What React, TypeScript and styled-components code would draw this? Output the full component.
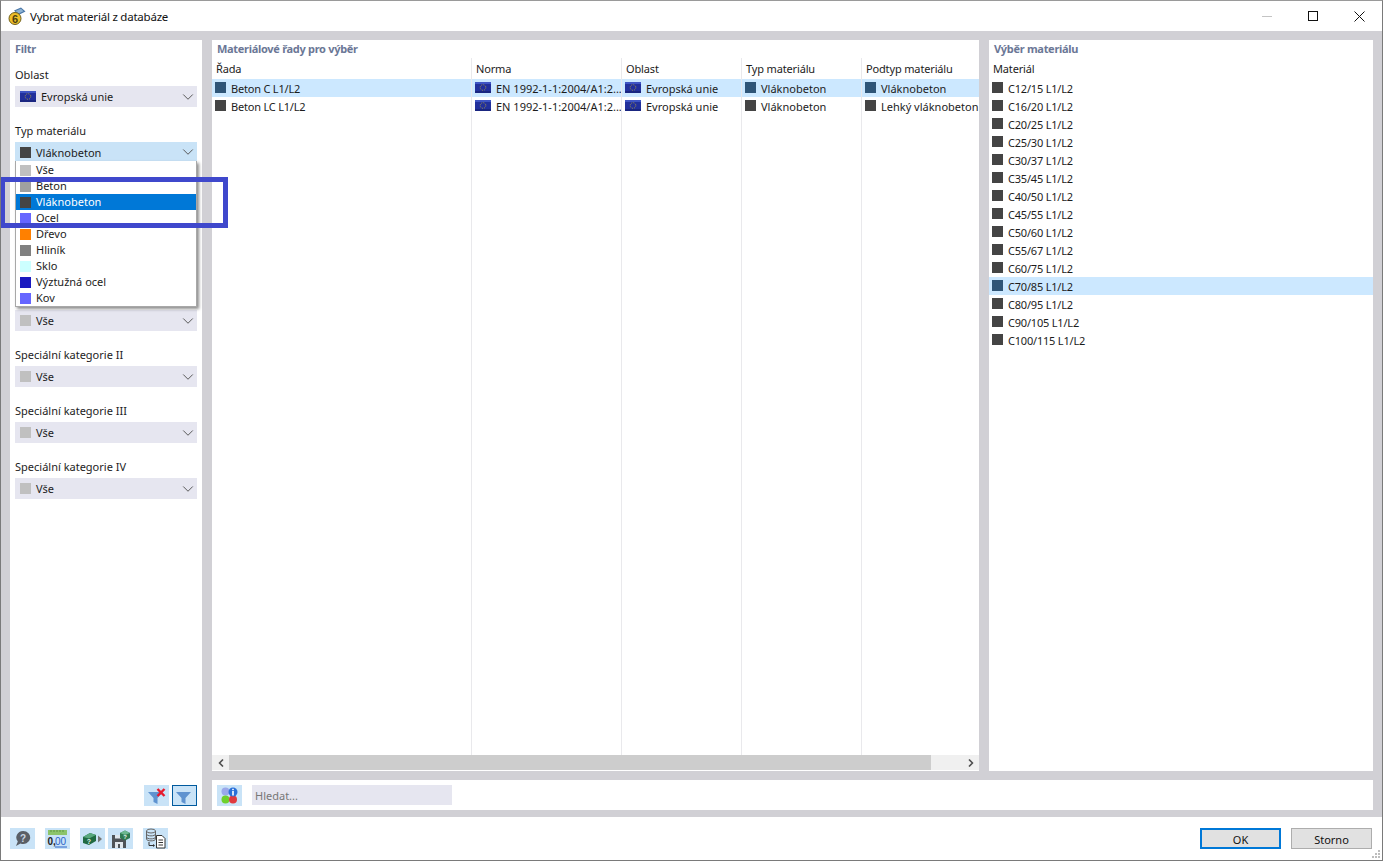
import React from "react";
import styled, { createGlobalStyle } from "styled-components";
import { ChevronDown, ChevronLeft, ChevronRight } from "lucide-react";

const GlobalStyle = createGlobalStyle`
  html, body {
    margin: 0;
    padding: 0;
    background: #fff;
  }
  body {
    font-family: "Noto Sans", "Open Sans", "Liberation Sans", sans-serif;
    font-size: 11px;
    color: #1c1c1c;
  }
`;

const Window = styled.div`
  position: relative;
  box-sizing: border-box;
  width: 1383px;
  height: 861px;
  display: flex;
  flex-direction: column;
  border: 1px solid #7a7a7a;
  border-top-color: #9a9a9a;
  background: #fff;
  overflow: hidden;
`;

const TitleBar = styled.div`
  height: 30px;
  flex: none;
  display: flex;
  align-items: center;
  padding-left: 7px;
  font-size: 11.5px;
`;

const TitleText = styled.span`
  flex: 1;
  margin-left: 4px;
  letter-spacing: -0.22px;
  color: #111;
`;

const WindowButton = styled.div`
  width: 46px;
  height: 30px;
  display: flex;
  align-items: center;
  justify-content: center;
`;

const Body = styled.div`
  flex: 1;
  min-height: 0;
  background: #d1d0d5;
  padding: 9px 9px 7px;
  display: grid;
  grid-template-columns: 192px 767px 384px;
  grid-template-rows: 731px 30px;
  gap: 9px 10px;
`;

const Panel = styled.div`
  background: #fff;
  display: flex;
  flex-direction: column;
  min-width: 0;
  min-height: 0;
`;

const FilterPanel = styled(Panel)`
  grid-row: 1 / span 2;
  position: relative;
  padding: 0 5px 4px;
`;

const PanelTitle = styled.div<{ $inset?: number }>`
  height: 18px;
  line-height: 18px;
  font-weight: 700;
  letter-spacing: -0.3px;
  color: #6b7796;
  padding-left: ${(p) => p.$inset ?? 5}px;
  flex: none;
`;

const FieldLabel = styled.div<{ $top: number }>`
  margin-top: ${(p) => p.$top}px;
  height: 16px;
  line-height: 16px;
`;

const Select = styled.div<{ $active?: boolean; $short?: boolean }>`
  margin-top: 3px;
  height: ${(p) => (p.$short ? 20 : 21)}px;
  display: flex;
  align-items: center;
  gap: 5px;
  padding: 0 0 0 5px;
  background: ${(p) => (p.$active ? "#c9e3f7" : "#e6e6f0")};
`;

const SelectText = styled.span`
  flex: 1;
`;

const Swatch = styled.span<{ $color: string }>`
  flex: none;
  display: inline-block;
  width: 11px;
  height: 11px;
  background: ${(p) => p.$color};
`;

const CoveredGap = styled.div`
  height: 145px;
  flex: none;
`;

const Spacer = styled.div`
  flex: 1;
`;

const FilterButtons = styled.div`
  display: flex;
  justify-content: flex-end;
  gap: 3px;
`;

const IconButton = styled.div<{ $outlined?: boolean }>`
  box-sizing: border-box;
  width: 25px;
  height: 21px;
  flex: none;
  display: flex;
  align-items: center;
  justify-content: center;
  background: #c9e3f7;
  border: ${(p) => (p.$outlined ? "1px solid #005a9e" : "none")};
`;

const Dropdown = styled.div`
  position: absolute;
  left: 5px;
  top: 121px;
  width: 182px;
  box-sizing: border-box;
  background: #fff;
  border: 1px solid #a8a8a8;
  border-top: none;
  padding: 1px 0 0;
  box-shadow: 2px 2px 3px rgba(0, 0, 0, 0.45);
  z-index: 2;
`;

const DropdownItem = styled.div<{ $selected?: boolean }>`
  height: 16px;
  display: flex;
  align-items: center;
  gap: 5px;
  padding-left: 4px;
  background: ${(p) => (p.$selected ? "#0078d7" : "transparent")};
  color: ${(p) => (p.$selected ? "#fff" : "#1c1c1c")};
`;

const DropdownText = styled.span`
  padding-bottom: 2px;
`;

const Callout = styled.div`
  position: absolute;
  left: -1px;
  top: 176px;
  width: 228px;
  height: 51px;
  box-sizing: border-box;
  border: 5px solid #3f48cc;
  z-index: 3;
  pointer-events: none;
`;

const SeriesPanel = styled(Panel)``;

const TableHeader = styled.div<{ $columns: string }>`
  display: grid;
  grid-template-columns: ${(p) => p.$columns};
  height: 21px;
  flex: none;
`;

const HeaderCell = styled.div`
  line-height: 21px;
  padding-left: 4px;
  letter-spacing: -0.15px;
  white-space: nowrap;
  overflow: hidden;
`;

const TableBody = styled.div`
  flex: 1;
  min-height: 0;
  display: flex;
  flex-direction: column;
`;

const Row = styled.div<{ $columns?: string; $selected?: boolean }>`
  display: grid;
  grid-template-columns: ${(p) => p.$columns ?? "1fr"};
  height: 18px;
  flex: none;
  background: ${(p) => (p.$selected ? "#cce8ff" : "transparent")};
`;

const Cell = styled.div`
  display: flex;
  align-items: center;
  gap: 5px;
  padding-left: 3px;
  white-space: nowrap;
  overflow: hidden;
  min-width: 0;
  padding-bottom: 2px;
  box-sizing: border-box;
`;

const CellText = styled.span<{ $tight?: boolean }>`
  padding-top: 2px;
  letter-spacing: ${(p) => (p.$tight ? "-0.2px" : "0")};
`;

const TableArea = styled.div`
  position: relative;
  flex: 1;
  min-height: 0;
  display: flex;
  flex-direction: column;
`;

const Dividers = styled.div<{ $columns: string }>`
  position: absolute;
  inset: 0;
  display: grid;
  grid-template-columns: ${(p) => p.$columns};
  pointer-events: none;
`;

const Divider = styled.div`
  border-right: 1px solid #e9e9ec;
`;

const ScrollBar = styled.div`
  height: 15px;
  flex: none;
  margin-bottom: 1px;
  display: flex;
  background: #f0f0f0;
`;

const ScrollArrow = styled.div`
  width: 17px;
  display: flex;
  align-items: center;
  justify-content: center;
  background: #f0f0f0;
`;

const ScrollTrack = styled.div`
  flex: 1;
  display: flex;
`;

const ScrollThumb = styled.div`
  width: 702px;
  background: #cdcdcd;
`;

const SearchPanel = styled(Panel)`
  grid-column: 2 / span 2;
  flex-direction: row;
  align-items: center;
  padding-left: 5px;
  gap: 10px;
`;

const SearchInput = styled.div`
  width: 200px;
  height: 20px;
  line-height: 22px;
  padding-left: 3px;
  box-sizing: border-box;
  background: #e6e6f0;
  color: #777;
`;

const Footer = styled.div`
  height: 43px;
  flex: none;
  display: flex;
  align-items: center;
  padding: 0 10px 0 9px;
`;

const FooterTools = styled.div`
  display: flex;
  flex: 1;
`;

const FooterTool = styled(IconButton)<{ $gap?: number }>`
  margin-left: ${(p) => p.$gap ?? 0}px;
`;

const DialogButton = styled.button<{ $primary?: boolean }>`
  box-sizing: border-box;
  width: 81px;
  height: 21px;
  margin-left: 10px;
  padding: 1px 0 0;
  font: inherit;
  color: #111;
  background: #e1e1e1;
  border: ${(p) => (p.$primary ? "2px solid #0078d7" : "1px solid #adadad")};
`;

const Grip = styled.svg`
  position: absolute;
  right: 1px;
  bottom: 1px;
`;

const columns = "260px 150px 120px 120px 117px";

const Flag = () => (
  <svg width="16" height="11" viewBox="0 0 16 11" style={{ flex: "none" }}>
    <rect width="16" height="11" fill="#22309c" />
    <rect width="16" height="2" fill="#3f55c4" />
    <rect y="9" width="16" height="2" fill="#1a2680" />
    <circle cx="8" cy="5.5" r="2.8" fill="none" stroke="#a89a44" strokeWidth="1" strokeDasharray="1 1.2" />
  </svg>
);

const AppIcon = () => (
  <svg width="18" height="18" viewBox="0 0 18 18" style={{ flex: "none" }}>
    <path d="M6 3.5 L13 0.5 L17.5 4.5 L10.5 8 Z" fill="#4a77a8" />
    <path d="M7.5 4 L13 1.8 L15.5 4.2 L10.5 6.5 Z" fill="#8fb4d4" />
    <circle cx="7" cy="11.5" r="6" fill="#efc02a" stroke="#6e5f1a" />
    <text x="7" y="15.5" textAnchor="middle" fontSize="11" fontWeight="700" fill="#4a3f12" fontFamily="Liberation Sans">
      6
    </text>
  </svg>
);

const FunnelIcon = ({ cross }: { cross?: boolean }) => (
  <svg width="20" height="18" viewBox="0 0 20 18">
    <path d="M1 5 H16 L10.5 11 V17 L6.5 15 V11 Z" fill="#5f93d0" />
    {cross && <path d="M10.5 2 L17.5 9 M17.5 2 L10.5 9" stroke="#e8192c" strokeWidth="2.4" />}
  </svg>
);

const ColorsIcon = () => (
  <svg width="17" height="17" viewBox="0 0 17 17">
    <circle cx="4.5" cy="4.5" r="4" fill="#9aa8ea" />
    <circle cx="4.5" cy="12.5" r="4" fill="#6fd02c" />
    <circle cx="12" cy="12.5" r="4" fill="#e0393e" />
    <circle cx="12" cy="5" r="4.5" fill="#2a6fd8" />
    <rect x="11.2" y="4" width="1.6" height="4.5" fill="#fff" />
    <rect x="11.2" y="1.8" width="1.6" height="1.4" fill="#fff" />
  </svg>
);

const HelpIcon = () => (
  <svg width="17" height="17" viewBox="0 0 17 17">
    <path d="M9 1 A7 6.5 0 1 1 6.5 13.5 L2 16 L3.8 11.5 A7 6.5 0 0 1 9 1 Z" fill="#5a5f66" />
    <text x="9" y="11.5" textAnchor="middle" fontSize="10" fontWeight="700" fill="#c9d6e2" fontFamily="Liberation Sans">
      ?
    </text>
  </svg>
);

const UnitsIcon = () => (
  <svg width="21" height="20" viewBox="0 0 21 20">
    <rect x="1" y="1" width="19" height="5" fill="#8cc46a" />
    <path d="M4 1 V3 M7 1 V3 M10 1 V3 M13 1 V3 M16 1 V3" stroke="#5d9442" strokeWidth="1" />
    <text x="0.5" y="16" fontSize="10" fontWeight="700" fill="#222" fontFamily="Liberation Sans">
      0,
    </text>
    <text x="8" y="16" fontSize="10" fill="#2a62c8" fontFamily="Liberation Sans">
      00
    </text>
    <path d="M8 18 H20" stroke="#2a62c8" strokeWidth="1" />
  </svg>
);

const Cube = ({ x, y }: { x: number; y: number }) => (
  <g transform={`translate(${x} ${y})`}>
    <path d="M0 3 L5 0.5 L10 3 V8 L5 10.5 L0 8 Z" fill="#2e7a50" />
    <path d="M0 3 L5 5 L10 3 L5 0.5 Z" fill="#6cb88f" />
    <text x="5" y="9" textAnchor="middle" fontSize="6" fontWeight="700" fill="#e4f2ea" fontFamily="Liberation Sans">
      ?
    </text>
  </g>
);

const ImportIcon = () => (
  <svg width="20" height="14" viewBox="0 0 20 14">
    <path d="M0 5 L7 1 L13 3 V9 L6 13 L0 11 Z" fill="#1f6a42" />
    <path d="M0 5 L7 1 L13 3 L6 6.5 Z" fill="#58a87e" />
    <text x="6" y="12" textAnchor="middle" fontSize="7" fontWeight="700" fill="#e4f2ea" fontFamily="Liberation Sans">
      ?
    </text>
    <path d="M15 3.5 L19 7 L15 10.5 Z" fill="#777" />
  </svg>
);

const SaveIcon = () => (
  <svg width="19" height="18" viewBox="0 0 19 18">
    <path d="M1 5 H13 L15 7 V18 H1 Z" fill="#4e5358" />
    <rect x="4" y="5" width="6" height="3.5" fill="#dfe6ec" />
    <rect x="4" y="12" width="8" height="6" fill="#dfe6ec" />
    <rect x="7" y="14" width="2" height="4" fill="#4e5358" />
    <Cube x={9} y={0} />
  </svg>
);

const LibraryIcon = () => (
  <svg width="21" height="21" viewBox="0 0 21 21">
    <ellipse cx="6" cy="3" rx="4.5" ry="2" fill="none" stroke="#666" />
    <path
      d="M1.5 3 V11 C1.5 13.5 10.5 13.5 10.5 11 V3 M1.5 6 C1.5 8.5 10.5 8.5 10.5 6 M1.5 9 C1.5 11.5 10.5 11.5 10.5 9"
      fill="none"
      stroke="#666"
    />
    <path d="M4 14 V17.5 H8" fill="none" stroke="#333" />
    <path d="M8 16 L10 17.5 L8 19 Z" fill="#333" />
    <path d="M11.5 7.5 H17 L20 10.5 V20 H11.5 Z" fill="#fff" stroke="#333" />
    <path d="M13.5 12 H18 M13.5 14.5 H18 M13.5 17 H18" stroke="#333" />
  </svg>
);

const seriesRows = [
  { name: "Beton C L1/L2", subtype: "Vláknobeton", selected: true },
  { name: "Beton LC L1/L2", subtype: "Lehký vláknobeton", selected: false },
];

const materials = [
  "C12/15 L1/L2",
  "C16/20 L1/L2",
  "C20/25 L1/L2",
  "C25/30 L1/L2",
  "C30/37 L1/L2",
  "C35/45 L1/L2",
  "C40/50 L1/L2",
  "C45/55 L1/L2",
  "C50/60 L1/L2",
  "C55/67 L1/L2",
  "C60/75 L1/L2",
  "C70/85 L1/L2",
  "C80/95 L1/L2",
  "C90/105 L1/L2",
  "C100/115 L1/L2",
];

const materialTypes = [
  { name: "Vše", color: "#c0c0c0" },
  { name: "Beton", color: "#a0a0a0" },
  { name: "Vláknobeton", color: "#444444", selected: true },
  { name: "Ocel", color: "#6666ff" },
  { name: "Dřevo", color: "#ff8000" },
  { name: "Hliník", color: "#808080" },
  { name: "Sklo", color: "#ccffff" },
  { name: "Výztužná ocel", color: "#1a1ac0" },
  { name: "Kov", color: "#6666ff" },
];

const lowerFilters = ["Speciální kategorie II", "Speciální kategorie III", "Speciální kategorie IV"];

const Chevron = () => <ChevronDown size={18} strokeWidth={1.3} color="#555" />;

export default function App() {
  const swatch = (selected: boolean) => (selected ? "#2f5577" : "#444444");

  return (
    <>
      <GlobalStyle />
      <Window>
        <TitleBar>
          <AppIcon />
          <TitleText>Vybrat materiál z databáze</TitleText>
          <WindowButton>
            <svg width="10" height="10" viewBox="0 0 10 10">
              <path d="M0 5.5 H10" stroke="#c4c4c4" />
            </svg>
          </WindowButton>
          <WindowButton>
            <svg width="10" height="10" viewBox="0 0 10 10">
              <rect x="0.5" y="0.5" width="9" height="9" fill="none" stroke="#111" />
            </svg>
          </WindowButton>
          <WindowButton>
            <svg width="11" height="11" viewBox="0 0 11 11">
              <path d="M0.5 0.5 L10.5 10.5 M10.5 0.5 L0.5 10.5" stroke="#111" />
            </svg>
          </WindowButton>
        </TitleBar>

        <Body>
          <FilterPanel>
            <PanelTitle $inset={0}>Filtr</PanelTitle>
            <FieldLabel $top={9}>Oblast</FieldLabel>
            <Select>
              <Flag />
              <SelectText>Evropská unie</SelectText>
              <Chevron />
            </Select>
            <FieldLabel $top={16}>Typ materiálu</FieldLabel>
            <Select $active $short>
              <Swatch $color="#444444" />
              <SelectText>Vláknobeton</SelectText>
              <Chevron />
            </Select>
            <Dropdown>
              {materialTypes.map((item) => (
                <DropdownItem key={item.name} $selected={item.selected}>
                  <Swatch $color={item.color} />
                  <DropdownText>{item.name}</DropdownText>
                </DropdownItem>
              ))}
            </Dropdown>
            <CoveredGap />
            <Select>
              <Swatch $color="#c0c0c0" />
              <SelectText>Vše</SelectText>
              <Chevron />
            </Select>
            {lowerFilters.map((label) => (
              <React.Fragment key={label}>
                <FieldLabel $top={16}>{label}</FieldLabel>
                <Select>
                  <Swatch $color="#c0c0c0" />
                  <SelectText>Vše</SelectText>
                  <Chevron />
                </Select>
              </React.Fragment>
            ))}
            <Spacer />
            <FilterButtons>
              <IconButton>
                <FunnelIcon cross />
              </IconButton>
              <IconButton $outlined>
                <FunnelIcon />
              </IconButton>
            </FilterButtons>
          </FilterPanel>

          <SeriesPanel>
            <PanelTitle>Materiálové řady pro výběr</PanelTitle>
            <TableArea>
              <Dividers $columns={columns}>
                <Divider />
                <Divider />
                <Divider />
                <Divider />
              </Dividers>
              <TableHeader $columns={columns}>
                <HeaderCell>Řada</HeaderCell>
                <HeaderCell>Norma</HeaderCell>
                <HeaderCell>Oblast</HeaderCell>
                <HeaderCell>Typ materiálu</HeaderCell>
                <HeaderCell>Podtyp materiálu</HeaderCell>
              </TableHeader>
              <TableBody>
                {seriesRows.map((row) => (
                  <Row key={row.name} $columns={columns} $selected={row.selected}>
                    <Cell>
                      <Swatch $color={swatch(row.selected)} />
                      <CellText $tight>{row.name}</CellText>
                    </Cell>
                    <Cell>
                      <Flag />
                      <CellText>EN 1992-1-1:2004/A1:2...</CellText>
                    </Cell>
                    <Cell>
                      <Flag />
                      <CellText>Evropská unie</CellText>
                    </Cell>
                    <Cell>
                      <Swatch $color={swatch(row.selected)} />
                      <CellText>Vláknobeton</CellText>
                    </Cell>
                    <Cell>
                      <Swatch $color={swatch(row.selected)} />
                      <CellText>{row.subtype}</CellText>
                    </Cell>
                  </Row>
                ))}
              </TableBody>
            </TableArea>
            <ScrollBar>
              <ScrollArrow>
                <ChevronLeft size={12} strokeWidth={3.5} color="#505050" />
              </ScrollArrow>
              <ScrollTrack>
                <ScrollThumb />
              </ScrollTrack>
              <ScrollArrow>
                <ChevronRight size={12} strokeWidth={3.5} color="#505050" />
              </ScrollArrow>
            </ScrollBar>
          </SeriesPanel>

          <Panel>
            <PanelTitle>Výběr materiálu</PanelTitle>
            <TableHeader $columns="1fr">
              <HeaderCell>Materiál</HeaderCell>
            </TableHeader>
            <TableBody>
              {materials.map((name) => {
                const selected = name === "C70/85 L1/L2";
                return (
                  <Row key={name} $selected={selected}>
                    <Cell>
                      <Swatch $color={swatch(selected)} />
                      <CellText $tight>{name}</CellText>
                    </Cell>
                  </Row>
                );
              })}
            </TableBody>
          </Panel>

          <SearchPanel>
            <IconButton>
              <ColorsIcon />
            </IconButton>
            <SearchInput>Hledat...</SearchInput>
          </SearchPanel>
        </Body>

        <Footer>
          <FooterTools>
            <FooterTool>
              <HelpIcon />
            </FooterTool>
            <FooterTool $gap={10}>
              <UnitsIcon />
            </FooterTool>
            <FooterTool $gap={10}>
              <ImportIcon />
            </FooterTool>
            <FooterTool $gap={3}>
              <SaveIcon />
            </FooterTool>
            <FooterTool $gap={10}>
              <LibraryIcon />
            </FooterTool>
          </FooterTools>
          <DialogButton $primary>OK</DialogButton>
          <DialogButton>Storno</DialogButton>
        </Footer>

        <Callout />
        <Grip width="11" height="11" viewBox="0 0 11 11">
          <path d="M8 2h2v2H8zM5 5h2v2H5zM8 5h2v2H8zM2 8h2v2H2zM5 8h2v2H5zM8 8h2v2H8z" fill="#bdbdbd" />
        </Grip>
      </Window>
    </>
  );
}
